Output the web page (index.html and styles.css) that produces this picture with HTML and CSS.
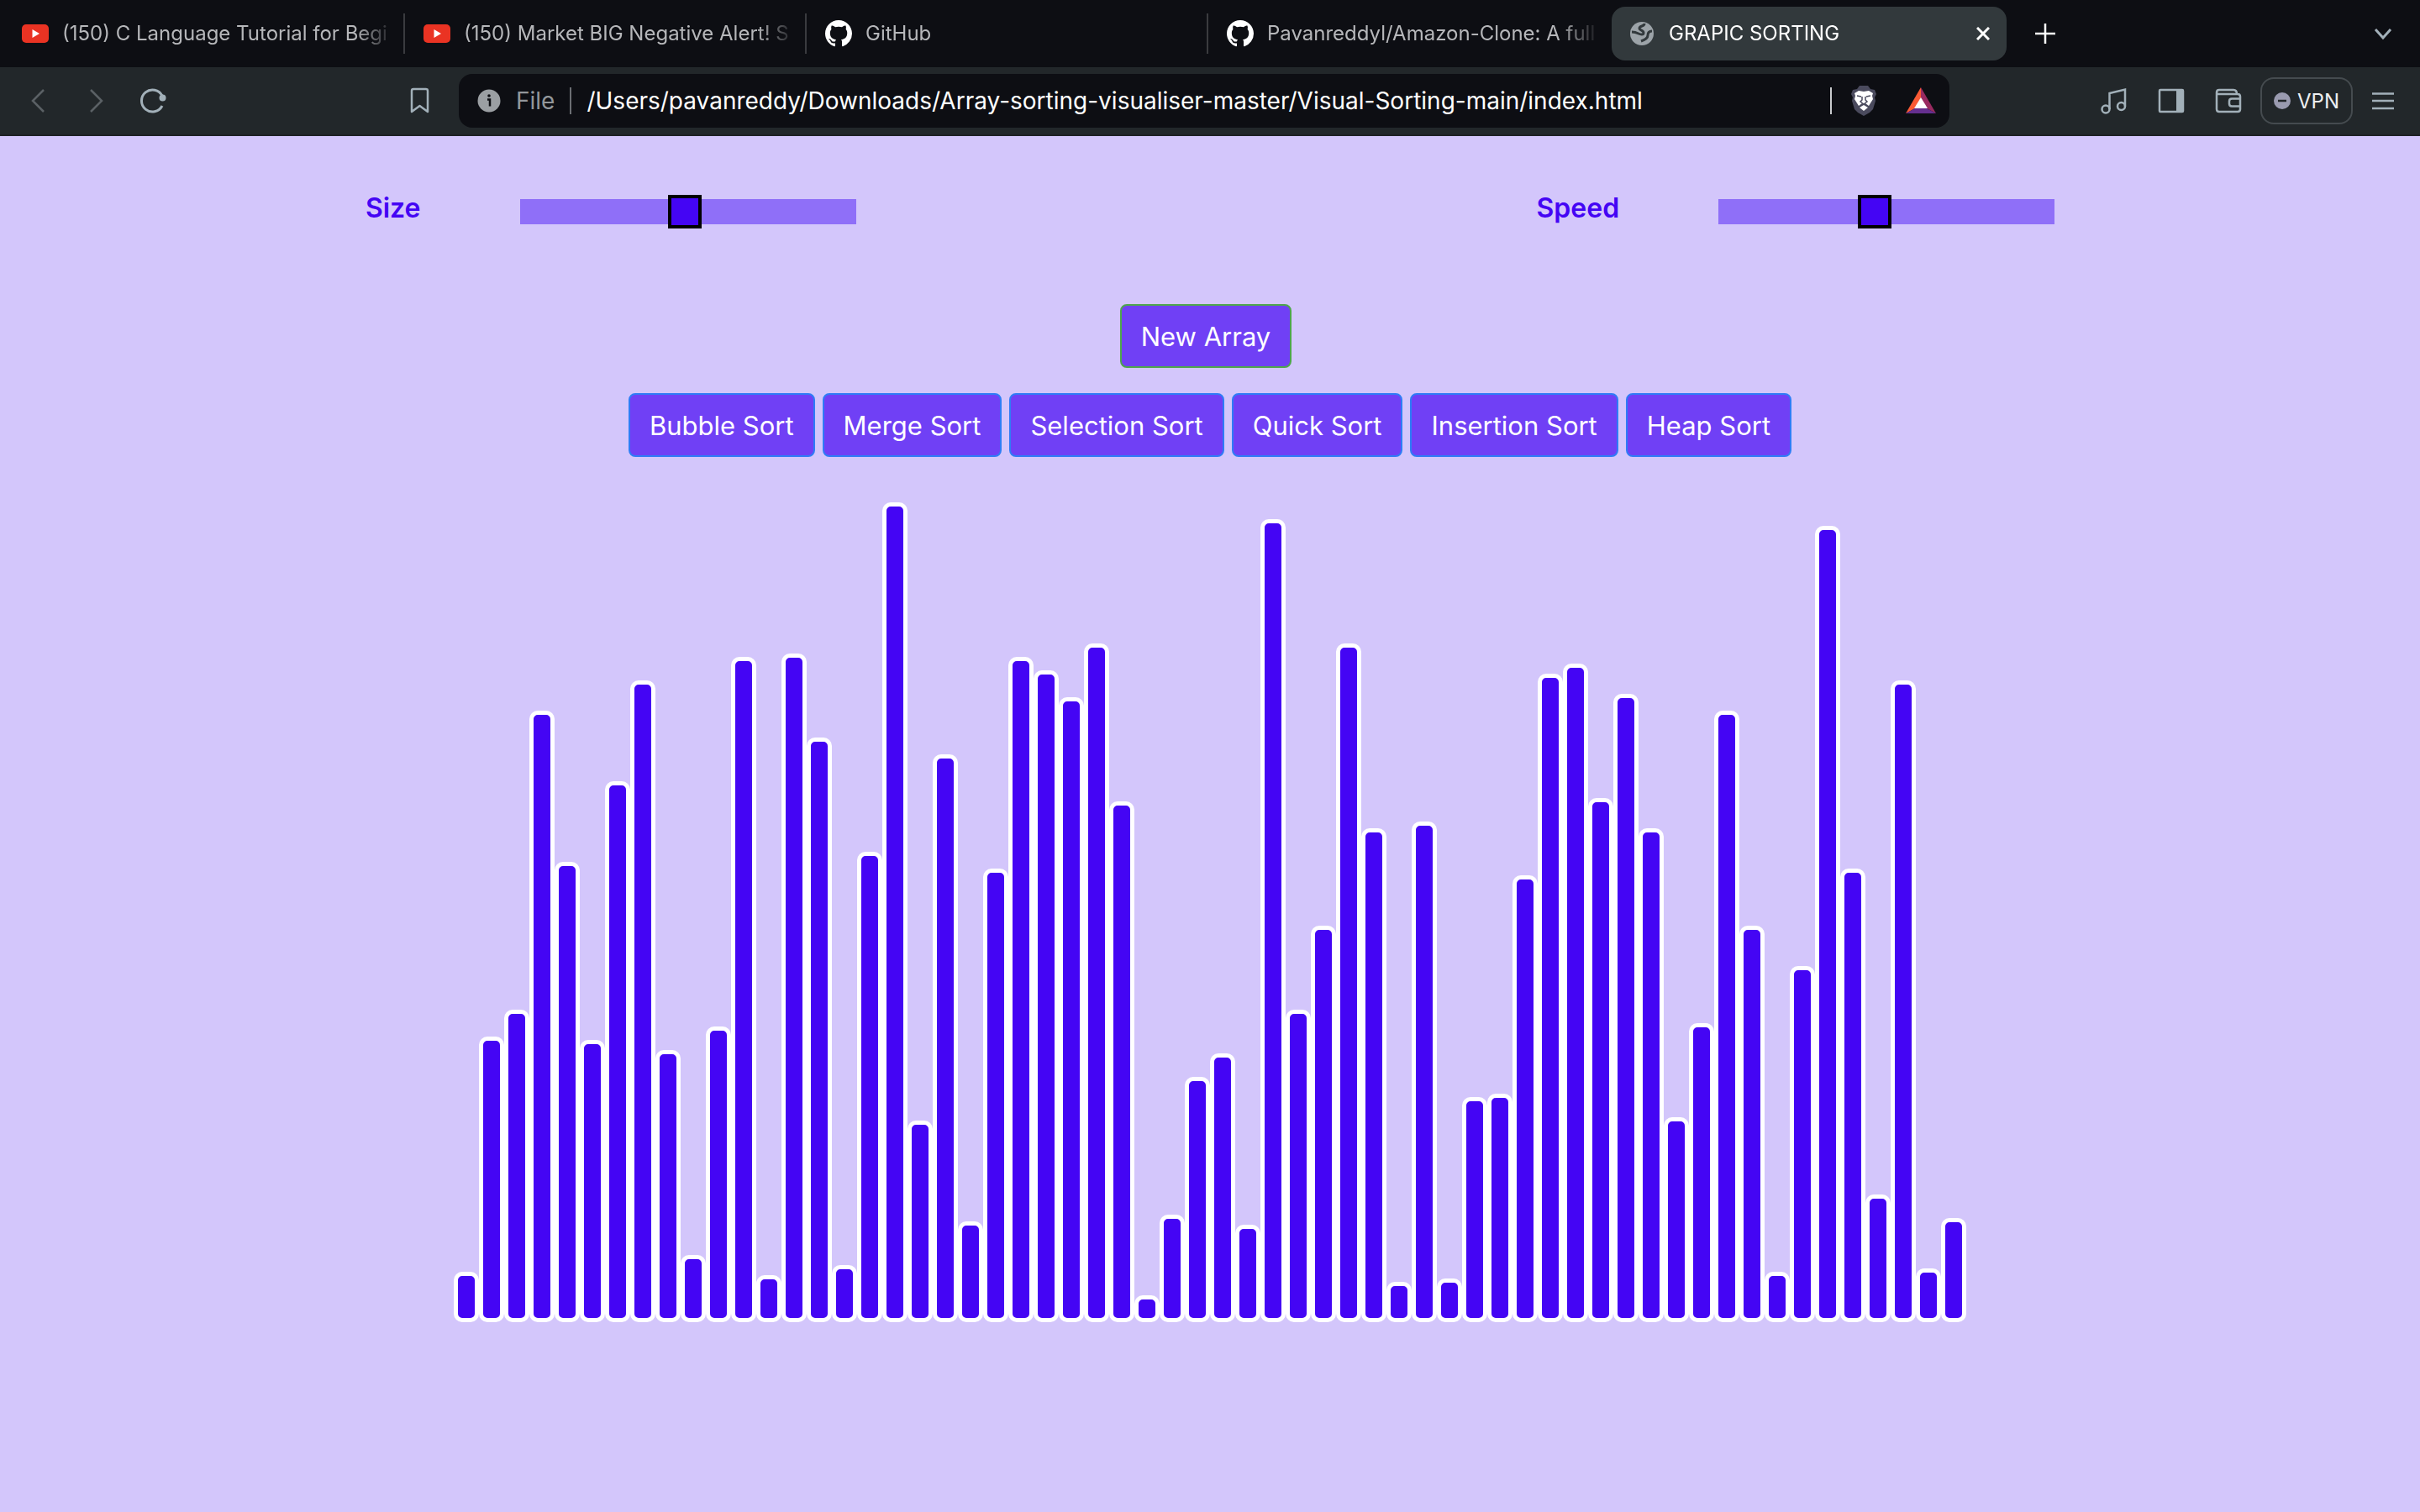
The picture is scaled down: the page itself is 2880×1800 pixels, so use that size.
FILE: index.html
```html
<!DOCTYPE html>
<html lang="en">
<head>
<meta charset="utf-8">
<title>GRAPIC SORTING</title>
<link rel="stylesheet" href="styles.css">
</head>
<body>
<svg class="defs" aria-hidden="true">
  <symbol id="youtube" viewBox="0 0 32 24"><rect y="1" width="32" height="22" rx="5" fill="#ea3323"/><path d="M12.500 7v10l8.500-5z" fill="#fff"/></symbol>
  <symbol id="github" viewBox="0 0 16 16"><path fill="#fff" d="M8 0C3.580 0 0 3.580 0 8c0 3.540 2.290 6.530 5.470 7.590.4.070.55-.17.55-.38 0-.19-.01-.82-.01-1.490-2.010.37-2.530-.49-2.690-.94-.09-.23-.48-.94-.82-1.130-.28-.15-.68-.52-.01-.53.63-.01 1.080.58 1.230.82.72 1.210 1.870.87 2.330.66.07-.52.28-.87.51-1.070-1.780-.2-3.640-.89-3.640-3.950 0-.87.31-1.590.82-2.150-.08-.2-.36-1.020.08-2.120 0 0 .67-.21 2.200.82.64-.18 1.320-.27 2-.27s1.360.09 2 .27c1.530-1.040 2.200-.82 2.200-.82.44 1.100.16 1.920.08 2.120.51.56.82 1.270.82 2.150 0 3.070-1.870 3.750-3.650 3.950.29.25.54.73.54 1.480 0 1.070-.01 1.930-.01 2.200 0 .21.15.46.55.38A8.010 8.010 0 0 0 16 8c0-4.420-3.580-8-8-8z"/></symbol>
</svg>

<header class="browser">
  <nav class="tabs" aria-label="Tabs">
    <a class="tab" href="#"><svg class="icon-32"><use href="#youtube"/></svg><span class="tab-title">(150) C Language Tutorial for Begi</span></a>
    <a class="tab" href="#"><svg class="icon-32"><use href="#youtube"/></svg><span class="tab-title">(150) Market BIG Negative Alert! S</span></a>
    <a class="tab" href="#"><svg class="icon-32"><use href="#github"/></svg><span class="tab-title">GitHub</span></a>
    <a class="tab tab-last" href="#"><svg class="icon-32"><use href="#github"/></svg><span class="tab-title">Pavanreddyl/Amazon-Clone: A full</span></a>
    <div class="tab tab-active">
      <svg class="icon-28" viewBox="0 0 28 28"><circle cx="14" cy="14" r="14" fill="#9ca3a8"/><path d="M17 2c0 4-6 2-6 6 0 2 5 2 5 5s-4 2-6 1-4-2-8-2" fill="none" stroke="#32393c" stroke-width="3"/><path d="M26 11c-4 0-5 2-5 5s-2 5-8 7" fill="none" stroke="#32393c" stroke-width="3"/></svg>
      <span class="tab-title">GRAPIC SORTING</span>
      <button class="bare" aria-label="Close tab"><svg class="icon-16" viewBox="0 0 16 16"><path d="M1 1l14 14M15 1L1 15" stroke="#fff" stroke-width="3"/></svg></button>
    </div>
    <button class="bare new-tab" aria-label="New tab"><svg class="icon-24" viewBox="0 0 24 24"><path d="M12 0v24M0 12h24" stroke="#fff" stroke-width="2.500"/></svg></button>
    <button class="bare tab-search" aria-label="Search tabs"><svg class="icon-24" viewBox="0 0 24 24"><path d="M3 7l9 10 9-10" fill="none" stroke="#a2b0b9" stroke-width="3"/></svg></button>
  </nav>

  <div class="toolbar">
    <div class="history">
      <button class="bare" aria-label="Back"><svg class="icon-32" viewBox="0 0 32 32"><path d="M22 3L9 16l13 13" fill="none" stroke="#5b6165" stroke-width="2.500"/></svg></button>
      <button class="bare" aria-label="Forward"><svg class="icon-32" viewBox="0 0 32 32"><path d="M10 3l13 13-13 13" fill="none" stroke="#5b6165" stroke-width="2.500"/></svg></button>
      <button class="bare" aria-label="Reload"><svg class="icon-32" viewBox="0 0 32 32"><path d="M27 22A13 13 0 1 1 27 10" fill="none" stroke="#a2b0b9" stroke-width="3"/><circle cx="27.500" cy="12.500" r="4" fill="#a2b0b9"/></svg></button>
    </div>
    <button class="bare" aria-label="Bookmark"><svg class="icon-32" viewBox="0 0 32 32"><path d="M6 4q0-2 2-2h15q2 0 2 2v25l-9.500-7L6 29z" fill="none" stroke="#a2b0b9" stroke-width="2.500" stroke-linejoin="round"/></svg></button>
    <div class="address">
      <svg class="icon-28" viewBox="0 0 28 28"><circle cx="14" cy="14" r="13.500" fill="#9b9fa3"/><path d="M12 12.500h3v8" fill="none" stroke="#0d0e13" stroke-width="2.500"/><circle cx="14" cy="8" r="1.800" fill="#0d0e13"/></svg>
      <span class="scheme">File</span>
      <input class="url" type="text" aria-label="Address" value="/Users/pavanreddy/Downloads/Array-sorting-visualiser-master/Visual-Sorting-main/index.html">
      <span class="rule"></span>
      <svg class="icon-36" viewBox="0 0 36 36"><path d="M13 0h10l3 4 5 1 2 5-2 4 1 4-3 10-4 4-7 4-7-4-4-4-3-10 1-4-2-4 2-5 5-1z" fill="#4a4a5d"/><path d="M12 6l6 1 6-1 5 3-1 3 1 4-5 8-4-3-2 1-2-1-4 3-5-8 1-4-1-3z" fill="#fff"/><path d="M18 23l5 3-5 4-5-4z" fill="#fff"/><path d="M10 12l5 1m11-1l-5 1m-5 0v4l-2 2 4 3 4-3-2-2v-4" fill="none" stroke="#4a4a5d" stroke-width="1.500"/></svg>
      <svg class="icon-36" viewBox="0 0 36 36"><path d="M18 2v13l-7 12-11 6z" fill="#fa5a35"/><path d="M18 2l18 31-11-6-7-12z" fill="#982a60"/><path d="M0 33l11-6h14l11 6z" fill="#652f8f"/><path d="M18 14l8 13H10z" fill="#fff"/></svg>
    </div>
    <div class="tools">
      <button class="bare" aria-label="Playlist"><svg class="icon-32" viewBox="0 0 32 32"><g fill="none" stroke="#a2b0b9" stroke-width="2.500"><circle cx="6" cy="26" r="4.500"/><circle cx="24.500" cy="22.500" r="4.500"/><path d="M10.500 26V7L29 2.500v20"/></g></svg></button>
      <button class="bare" aria-label="Sidebar"><svg class="icon-32" viewBox="0 0 32 32"><rect x="2" y="3" width="28" height="26" rx="1" fill="none" stroke="#a2b0b9" stroke-width="2.500"/><path d="M22 2h8v28h-8z" fill="#a2b0b9"/></svg></button>
      <button class="bare" aria-label="Wallet"><svg class="icon-32" viewBox="0 0 32 32"><g fill="none" stroke="#a2b0b9" stroke-width="2.500"><path d="M2 6v20q0 3 3 3h22q3 0 3-3V11q0-3-3-3H4Q2 8 2 6q0-3 3-3h17q4 0 4 5"/><path d="M30 13.500H20q-3 0-3 3v3q0 3 3 3h10"/></g></svg></button>
      <button class="vpn"><svg class="icon-20" viewBox="0 0 20 20"><circle cx="10" cy="10" r="10" fill="#9a9bb0"/><path d="M5 10h10" stroke="#22272a" stroke-width="2.500"/></svg>VPN</button>
      <button class="bare" aria-label="Menu"><svg class="icon-32" viewBox="0 0 32 32"><path d="M3 7.500h26M3 16h26M3 25h26" stroke="#a2b0b9" stroke-width="2.500"/></svg></button>
    </div>
  </div>
</header>

<main>
  <section class="controls">
    <div class="control"><label for="size">Size</label><input id="size" type="range" min="0" max="100" value="49"></div>
    <div class="control"><label for="speed">Speed</label><input id="speed" type="range" min="0" max="100" value="46"></div>
  </section>
  <div class="actions"><button class="btn btn-new">New Array</button></div>
  <div class="actions">
    <button class="btn">Bubble Sort</button>
    <button class="btn">Merge Sort</button>
    <button class="btn">Selection Sort</button>
    <button class="btn">Quick Sort</button>
    <button class="btn">Insertion Sort</button>
    <button class="btn">Heap Sort</button>
  </div>
  <div class="bars" id="bars"></div>
</main>
<script src="script.js"></script>
</body>
</html>
```
FILE: styles.css
```css
* { box-sizing: border-box; }

body {
  margin: 0;
  min-height: 100vh;
  background: #d3c6fb;
  font-family: Inter, "Liberation Sans", sans-serif;
}

button, input { font: inherit; }
svg { display: block; flex: none; }
.defs { display: none; }

.icon-16 { width: 16px; height: 16px; }
.icon-20 { width: 20px; height: 20px; }
.icon-24 { width: 24px; height: 24px; }
.icon-28 { width: 28px; height: 28px; }
.icon-32 { width: 32px; height: 32px; }
.icon-36 { width: 36px; height: 36px; }

.bare {
  flex: none;
  padding: 0;
  border: 0;
  background: none;
}

/* Tab strip */
.tabs {
  display: flex;
  align-items: center;
  height: 80px;
  padding: 0 32px 0 4px;
  background: #0d0e13;
}

.tab {
  display: flex;
  align-items: center;
  gap: 16px;
  flex: 0 1 478px;
  min-width: 0;
  height: 48px;
  padding: 0 10px 0 22px;
  border-right: 2px solid #3a3b3f;
  color: #b6b7ba;
  font-size: 24px;
  line-height: 32px;
  text-decoration: none;
}

.tab-last { border-right-color: transparent; }

.tab-title {
  flex: 1;
  min-width: 0;
  overflow: hidden;
  white-space: nowrap;
  -webkit-mask-image: linear-gradient(to right, #000 calc(100% - 48px), transparent);
  mask-image: linear-gradient(to right, #000 calc(100% - 48px), transparent);
}

.tab-active {
  flex-basis: 470px;
  gap: 18px;
  height: 64px;
  margin-left: 2px;
  padding-right: 20px;
  border: 0;
  border-radius: 16px;
  background: #32393c;
  color: #fff;
}

.new-tab { margin-left: 34px; }
.tab-search { margin-left: auto; }

/* Toolbar */
.toolbar {
  display: flex;
  align-items: center;
  height: 82px;
  padding: 0 28px 0 30px;
  border-bottom: 2px solid #1d2024;
  background: #22272a;
}

.history {
  display: flex;
  gap: 36px;
  margin-right: auto;
}

.address {
  display: flex;
  align-items: center;
  flex: 0 1 1774px;
  min-width: 0;
  height: 64px;
  margin-left: 30px;
  padding: 0 16px 0 22px;
  border-radius: 16px;
  background: #0d0e13;
  font-size: 28px;
  line-height: 32px;
}

.scheme {
  margin-left: 18px;
  padding-right: 18px;
  border-right: 2px solid #6b6e73;
  color: #93979b;
}

.url {
  flex: 1;
  min-width: 0;
  padding: 0 18px;
  border: 0;
  background: none;
  color: #fff;
  outline: 0;
}

.rule {
  width: 2px;
  height: 32px;
  margin-right: 20px;
  background: #c9cbcd;
}

.address .icon-36 + .icon-36 { margin-left: 32px; }

.tools {
  display: flex;
  align-items: center;
  gap: 36px;
  margin-left: 180px;
}

.vpn {
  display: flex;
  align-items: center;
  justify-content: center;
  gap: 8px;
  width: 110px;
  height: 56px;
  margin: 0 -16px 0 -14px;
  padding: 0;
  border: 2px solid #454b4f;
  border-radius: 16px;
  background: none;
  color: #eef0f1;
  font-size: 24px;
}

/* Sorting controls */
.controls {
  display: flex;
  justify-content: space-between;
  padding: 70px 15.1% 90px;
}

.control {
  display: flex;
  align-items: center;
  gap: 118px;
  height: 40px;
  color: #4405f4;
  font-size: 32px;
  font-weight: 600;
  line-height: 40px;
}

.control label { padding-bottom: 8px; }

.control input {
  width: 400px;
  height: 30px;
  margin: 0;
  background: #8f6ff8;
  appearance: none;
}

.control input::-webkit-slider-thumb {
  width: 40px;
  height: 40px;
  border: 4px solid #000;
  background: #4405f4;
  appearance: none;
}

.actions {
  display: flex;
  justify-content: center;
  gap: 9px;
  margin-bottom: 30px;
}

.btn {
  height: 76px;
  padding: 2px 23px 0;
  border: 2px solid #2f7cf6;
  border-radius: 8px;
  background: #7040f5;
  color: #fff;
  font-size: 31px;
  line-height: 48px;
}

.btn-new {
  margin-right: 10px;
  border-color: #4ea54d;
}

/* Array */
.bars {
  display: flex;
  align-items: flex-end;
  justify-content: center;
  height: 1000px;
}

.bar {
  width: 30px;
  border: 5px solid #fff;
  border-radius: 10px;
  background: #4405f4;
}
```
FILE: script.js
```js
const heights = [
  60, 340, 372, 728, 548, 336, 644, 764, 324, 80,
  352, 792, 56, 796, 696, 68, 560, 976, 240, 676,
  120, 540, 792, 776, 744, 808, 620, 32, 128, 292,
  320, 116, 956, 372, 472, 808, 588, 48, 596, 52,
  268, 272, 532, 772, 784, 624, 748, 588, 244, 356,
  728, 472, 60, 424, 948, 540, 152, 764, 64, 124
];

const bars = document.getElementById("bars");
for (const height of heights) {
  const bar = document.createElement("div");
  bar.className = "bar";
  bar.style.height = height + "px";
  bars.append(bar);
}
```
